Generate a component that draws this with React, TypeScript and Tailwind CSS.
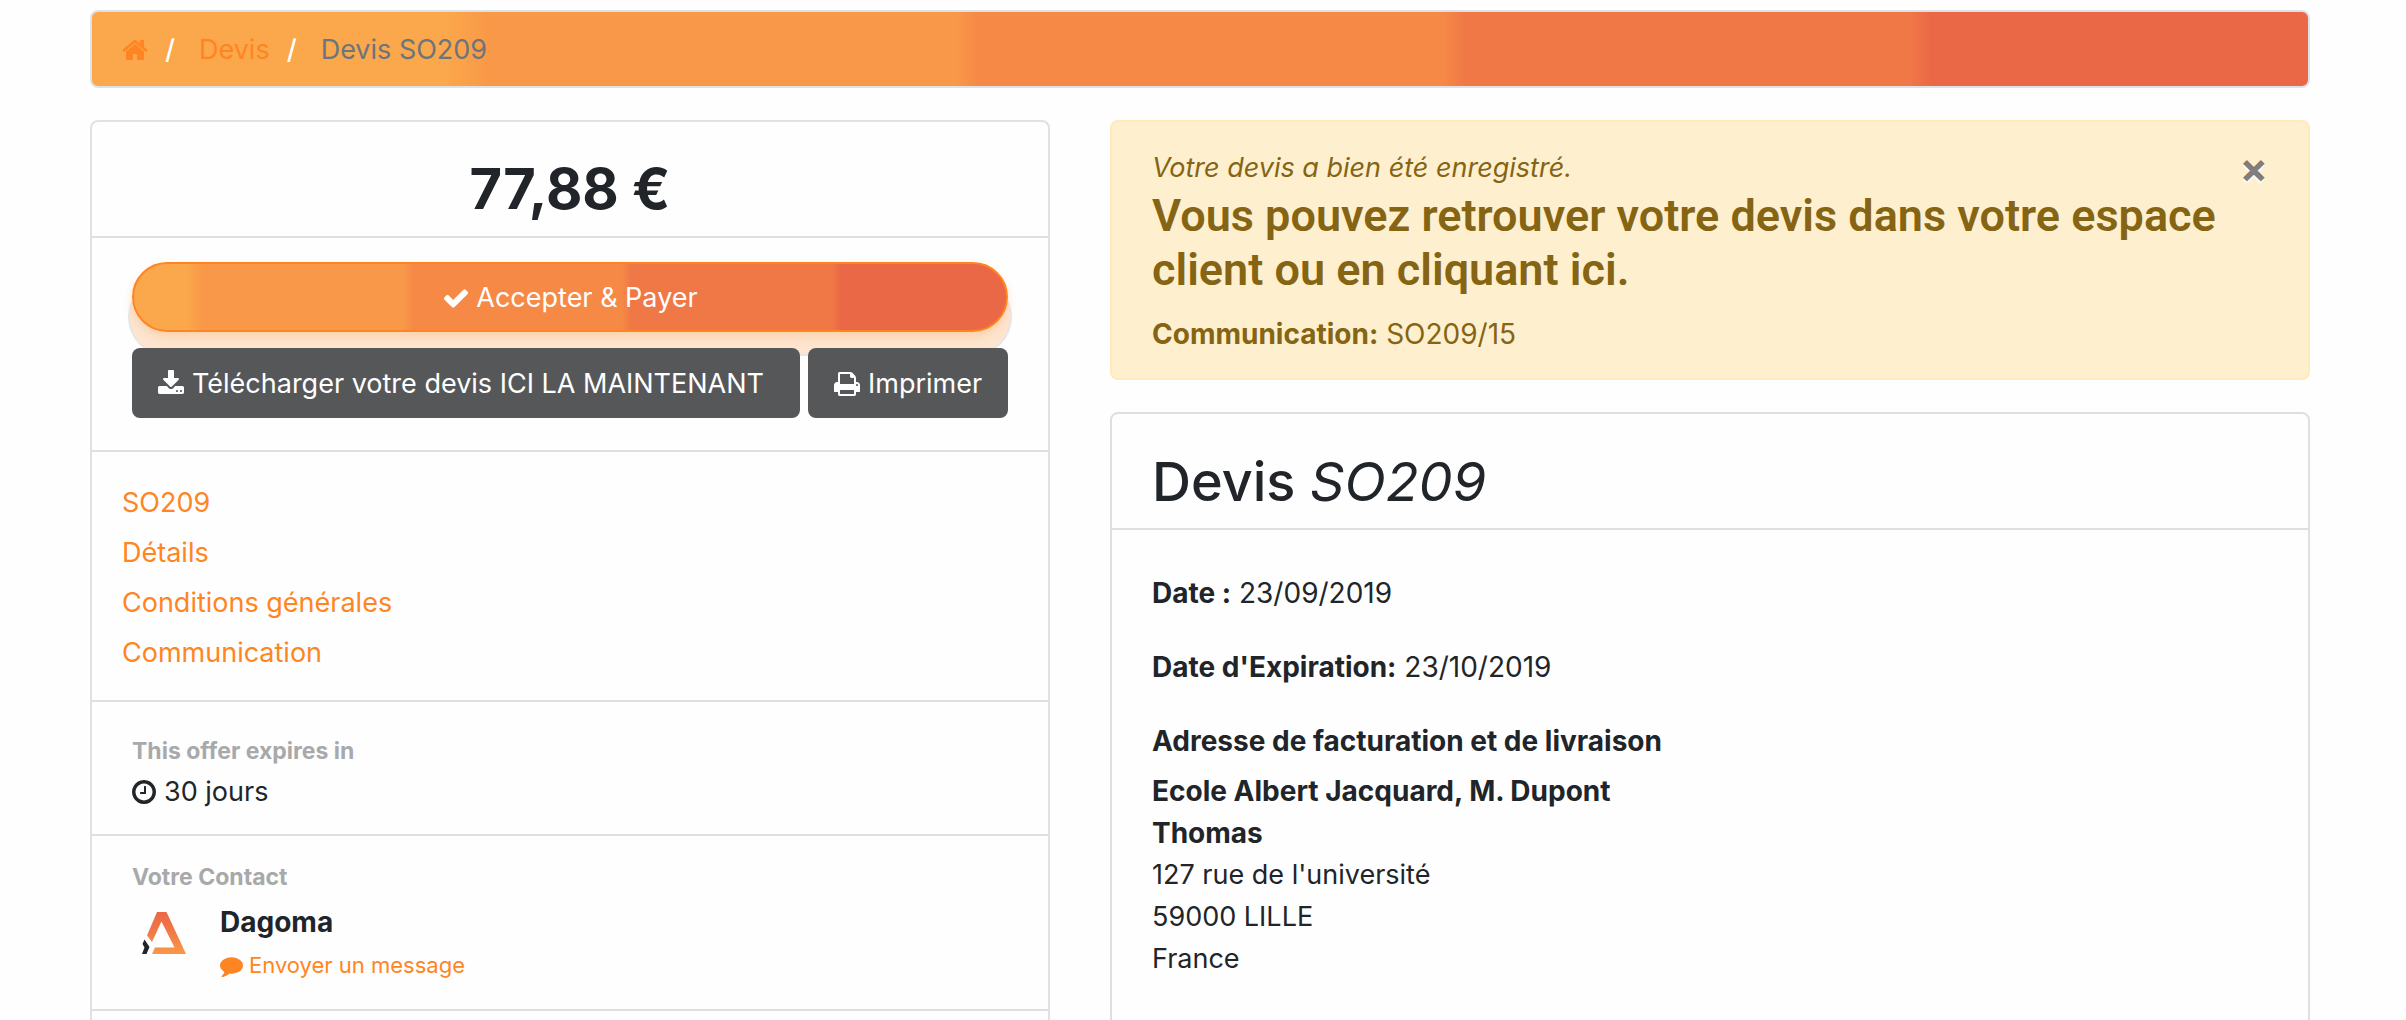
import type { ReactNode } from "react";

const icons = {
  home: {
    viewBox: "64 0 1664 1792",
    d: "M1472 992v480q0 26-19 45t-45 19h-384v-384h-256v384h-384q-26 0-45-19t-19-45v-480q0-1 .5-3t.5-3l575-474 575 474q1 2 1 6zm223-69l-62 74q-8 9-21 11h-3q-13 0-21-7l-692-577-692 577q-12 8-24 7-13-2-21-11l-62-74q-8-10-7-23.5t11-21.5l719-599q32-26 76-26t76 26l244 204v-195q0-14 9-23t23-9h192q14 0 23 9t9 23v408l219 182q10 8 11 21.5t-7 23.5z",
  },
  check: {
    viewBox: "0 0 1792 1792",
    d: "M1671 566q0 40-28 68l-724 724-136 136q-28 28-68 28t-68-28l-136-136-362-362q-28-28-28-68t28-68l136-136q28-28 68-28t68 28l294 295 656-657q28-28 68-28t68 28l136 136q28 28 28 68z",
  },
  download: {
    viewBox: "64 0 1664 1792",
    d: "M1344 1344q0-26-19-45t-45-19-45 19-19 45 19 45 45 19 45-19 19-45zm256 0q0-26-19-45t-45-19-45 19-19 45 19 45 45 19 45-19 19-45zm128-224v320q0 40-28 68t-68 28h-1472q-40 0-68-28t-28-68v-320q0-40 28-68t68-28h465l135 136q58 56 136 56t136-56l136-136h464q40 0 68 28t28 68zm-325-569q17 41-14 70l-448 448q-18 19-45 19t-45-19l-448-448q-31-29-14-70 17-39 59-39h256v-448q0-26 19-45t45-19h256q26 0 45 19t19 45v448h256q42 0 59 39z",
  },
  print: {
    viewBox: "64 0 1664 1792",
    d: "M448 1536h896v-256h-896v256zm0-640h896v-384h-160q-40 0-68-28t-28-68v-160h-640v640zm1152 64q0-26-19-45t-45-19-45 19-19 45 19 45 45 19 45-19 19-45zm128 0v416q0 13-9.5 22.5t-22.5 9.5h-224v160q0 40-28 68t-68 28h-960q-40 0-68-28t-28-68v-160h-224q-13 0-22.5-9.5t-9.5-22.5v-416q0-79 56.5-135.5t135.5-56.5h64v-544q0-40 28-68t68-28h672q40 0 88 20t76 48l152 152q28 28 48 76t20 88v256h64q79 0 135.5 56.5t56.5 135.5z",
  },
  clock: {
    viewBox: "128 0 1536 1792",
    d: "M1024 544v448q0 14-9 23t-23 9h-320q-14 0-23-9t-9-23v-64q0-14 9-23t23-9h224v-352q0-14 9-23t23-9h64q14 0 23 9t9 23zm416 352q0-148-73-273t-198-198-273-73-273 73-198 198-73 273 73 273 198 198 273 73 273-73 198-198 73-273zm224 0q0 209-103 385.5t-279.5 279.5-385.5 103-385.5-103-279.5-279.5-103-385.5 103-385.5 279.5-279.5 385.5-103 385.5 103 279.5 279.5 103 385.5z",
  },
  comment: {
    viewBox: "0 0 1792 1792",
    d: "M1792 896q0 174-120 321.5t-326 233-450 85.5q-70 0-145-8-198 175-460 242-49 14-114 22-17 2-30.5-9t-17.5-29v-1q-3-4-.5-12t2-10 4.5-9.5l6-9 7-8.5 8-9q7-8 31-34.5t34.5-38 31-39.5 32.5-51 27-59 26-76q-157-89-247.5-220t-90.5-281q0-130 71-248.5t191-204.5 286-136.5 348-50.5q244 0 450 85.5t326 233 120 321.5z",
  },
};

const Icon = ({
  name,
  className = "h-7",
}: {
  name: keyof typeof icons;
  className?: string;
}) => (
  <svg
    viewBox={icons[name].viewBox}
    fill="currentColor"
    aria-hidden="true"
    className={`w-auto shrink-0 ${className}`}
  >
    <path d={icons[name].d} />
  </svg>
);

const Logo = () => (
  <svg viewBox="0 0 44 42" aria-hidden="true" className="h-[42px] w-11">
    <defs>
      <linearGradient id="logo" x1="0" y1="0" x2="0" y2="1">
        <stop offset="0" stopColor="#eb6847" />
        <stop offset="0.45" stopColor="#f07846" />
        <stop offset="0.75" stopColor="#f68946" />
        <stop offset="1" stopColor="#f99848" />
      </linearGradient>
    </defs>
    <path
      d="M15 0H24.500L44 42H10L13 35.500H32.500L19.500 9.500L10 30L5 23.500Z"
      fill="url(#logo)"
    />
    <path d="M2.500 27.500L7.500 35L4.500 42H0L2.500 35.500L.5 32Z" fill="#212529" />
  </svg>
);

const links = ["SO209", "Détails", "Conditions générales", "Communication"];

const CardTitle = ({ children }: { children: ReactNode }) => (
  <div className="border-b-2 border-[#dfdfdf] px-10 pt-[34px] pb-[13px]">
    {children}
  </div>
);

const Breadcrumb = () => (
  <nav
    aria-label="breadcrumb"
    className="rounded-lg border-2 border-[#dee2e6] bg-[linear-gradient(90deg,#fba74b_16%,#f99848_18%,#f99848_39%,#f68946_40%,#f68946_61%,#f07846_62%,#f07846_82%,#eb6847_83%)] px-[30px] pt-[17px] pb-[15px]"
  >
    <ol className="flex items-center gap-[17px] text-[#6c757d]">
      <li>
        <a href="#home" aria-label="Accueil" className="text-[#ff8522]">
          <Icon name="home" />
        </a>
      </li>
      <li className="flex gap-6 before:font-medium before:text-white before:content-['/']">
        <a href="#devis" className="text-[#ff8522]">
          Devis
        </a>
      </li>
      <li className="flex gap-6 before:font-medium before:text-white before:content-['/']">
        <span>Devis SO209</span>
      </li>
    </ol>
  </nav>
);

const Sidebar = () => (
  <aside className="rounded-lg border-2 border-[#dee2e6]">
    <CardTitle>
      <h2 className="text-center text-[56px] leading-[67px] font-bold">
        77,88 €
      </h2>
    </CardTitle>
    <div className="border-b-2 border-[#dfdfdf] px-10 pt-6 pb-8">
      <button
        type="button"
        className="mb-4 flex h-[70px] w-full items-center justify-center gap-1.5 rounded-full border-2 border-[#ff8522] bg-[linear-gradient(90deg,#fba74b_6%,#f99848_8%,#f99848_31%,#f68946_32%,#f68946_56%,#f07846_57%,#f07846_80%,#eb6847_81%)] pt-0.5 text-white shadow-[0_6px_12px_-2px_#f8cfa8,0_20px_0_2px_#fee5d0,0_20px_0_4px_#e6e6e8]"
      >
        <Icon name="check" />
        Accepter &amp; Payer
      </button>
      <div className="relative flex gap-2 text-white">
        <button
          type="button"
          className="flex h-[70px] flex-1 items-center gap-2 rounded-lg bg-[#565759] pt-0.5 pl-[26px]"
        >
          <Icon name="download" />
          Télécharger votre devis ICI LA MAINTENANT
        </button>
        <button
          type="button"
          className="flex h-[70px] w-[200px] items-center gap-2 rounded-lg bg-[#565759] pt-0.5 pl-[26px]"
        >
          <Icon name="print" />
          Imprimer
        </button>
      </div>
    </div>
    <ul className="border-b-2 border-[#dfdfdf] px-[30px] pt-[26px] pb-[22px]">
      {links.map((link) => (
        <li key={link} className="py-1">
          <a href={`#${link}`} className="text-[#ff8522]">
            {link}
          </a>
        </li>
      ))}
    </ul>
    <div className="border-b-2 border-[#dfdfdf] px-10 pt-[29px] pb-[21px]">
      <h3 className="text-[23px] leading-10 font-bold text-[#a8a9aa]">
        This offer expires in
      </h3>
      <p className="flex items-center gap-2">
        <Icon name="clock" />
        30 jours
      </p>
    </div>
    <div className="border-b-2 border-[#dfdfdf] px-10 pt-[21px] pb-[23px]">
      <h3 className="text-[23px] leading-10 font-bold text-[#a8a9aa]">
        Votre Contact
      </h3>
      <div className="flex gap-[34px] pt-1">
        <div className="pt-[11px] pl-2.5">
          <Logo />
        </div>
        <div>
          <p className="text-[28px] font-bold">Dagoma</p>
          <a
            href="#message"
            className="flex items-center gap-1.5 pt-px text-[22px] text-[#ff8522]"
          >
            <Icon name="comment" className="h-[23px]" />
            Envoyer un message
          </a>
        </div>
      </div>
    </div>
    <div className="h-16" />
  </aside>
);

const Alert = () => (
  <div
    role="alert"
    className="flex rounded-lg border-2 border-[#feeaba] bg-[#fef0ce] px-10 pt-[25px] pb-[23px] text-[#856414]"
  >
    <div className="flex-1">
      <p className="italic">Votre devis a bien été enregistré.</p>
      <h4 className="mb-4 font-[Roboto,sans-serif] text-[45px] leading-[54px] font-semibold">
        Vous pouvez retrouver votre devis dans votre espace client ou en
        cliquant ici.
      </h4>
      <p className="text-[28px]">
        <strong>Communication:</strong> SO209/15
      </p>
    </div>
    <button
      type="button"
      aria-label="Fermer"
      className="self-start text-[42px] leading-[42px] font-bold text-black/50 [text-shadow:0_2px_0_#fff]"
    >
      ×
    </button>
  </div>
);

const Quote = () => (
  <section className="rounded-lg border-2 border-[#dfdfdf]">
    <CardTitle>
      <h1 className="text-[54px] leading-[67px] font-medium">
        Devis <em className="font-normal">SO209</em>
      </h1>
    </CardTitle>
    <div className="px-10 pt-[42px] pb-24 text-[28px]">
      <p className="mb-8">
        <strong>Date :</strong> 23/09/2019
      </p>
      <p className="mb-8">
        <strong>Date d'Expiration:</strong> 23/10/2019
      </p>
      <p className="mb-2 font-bold">Adresse de facturation et de livraison</p>
      <address className="w-1/2 not-italic">
        <p className="font-bold">Ecole Albert Jacquard, M. Dupont Thomas</p>
        <div className="text-[27px]">
          127 rue de l'université
          <br />
          59000 LILLE
          <br />
          France
        </div>
      </address>
    </div>
  </section>
);

export default function App() {
  return (
    <div className="h-screen overflow-hidden bg-[#fefefe] pt-2.5 pr-24 pl-[90px] font-[Inter,sans-serif] text-[27px] leading-[42px] text-[#212529]">
      <Breadcrumb />
      <main className="mt-8 grid grid-cols-[4fr_5fr] items-start gap-[60px]">
        <Sidebar />
        <div className="grid gap-8">
          <Alert />
          <Quote />
        </div>
      </main>
    </div>
  );
}
